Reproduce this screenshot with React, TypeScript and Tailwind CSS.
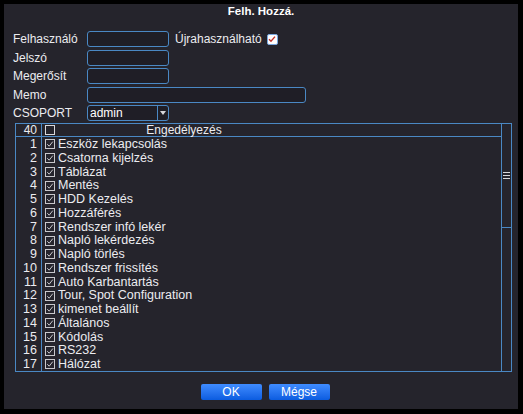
import React from 'react'

const RIGHTS = [
  'Eszköz lekapcsolás',
  'Csatorna kijelzés',
  'Táblázat',
  'Mentés',
  'HDD Kezelés',
  'Hozzáférés',
  'Rendszer infó lekér',
  'Napló lekérdezés',
  'Napló törlés',
  'Rendszer frissítés',
  'Auto Karbantartás',
  'Tour, Spot Configuration',
  'kimenet beállít',
  'Általános',
  'Kódolás',
  'RS232',
  'Hálózat',
]

function Tick() {
  return (
    <svg width="10" height="10" viewBox="0 0 10 10" className="shrink-0">
      <rect x="0.5" y="0.5" width="9" height="9" fill="none" stroke="#c8c8cc" />
      <path d="M2.3 5.2 L4.2 7.2 L7.8 2.6" fill="none" stroke="#c8c8cc" strokeWidth="1" />
    </svg>
  )
}

function Field({ w }: { w: string }) {
  return <div className={`${w} h-[16px] rounded-[3px] border border-[#4a88c4] bg-[#1f1e26]`} />
}

function Row({ label, children }: { label: string; children: React.ReactNode }) {
  return (
    <div className="flex items-center h-[18.5px]">
      <div className="w-[74px] text-[12px] leading-none">{label}</div>
      {children}
    </div>
  )
}

export default function App() {
  return (
    <div
      className="w-[523px] h-[414px] bg-black pt-[4px] pl-[4px] pr-[5px] pb-[5px] text-[#ececf0]"
      style={{ fontFamily: '"Liberation Sans", Arial, sans-serif' }}
    >
      <div className="h-full bg-[#25242c] flex flex-col">
        <div className="h-[14px] pt-[1px] flex items-center justify-center text-[11.5px] font-bold text-white">
          Felh. Hozzá.
        </div>

        <div className="pl-[9px] pt-[12px] flex flex-col">
          <Row label="Felhasználó">
            <Field w="w-[82px]" />
            <span className="ml-[6px] text-[12px] leading-none">Újrahasználható</span>
            <div className="ml-[5px] w-[11px] h-[11px] rounded-[2px] bg-white border border-[#7aa8e0] flex items-center justify-center">
              <svg width="8" height="8" viewBox="0 0 8 8">
                <path d="M1 4.2 L3 6.2 L7 1.6" fill="none" stroke="#c0302a" strokeWidth="1.4" />
              </svg>
            </div>
          </Row>
          <Row label="Jelszó">
            <Field w="w-[82px]" />
          </Row>
          <Row label="Megerősít">
            <Field w="w-[82px]" />
          </Row>
          <Row label="Memo">
            <Field w="w-[219px]" />
          </Row>
          <Row label="CSOPORT">
            <div className="w-[82px] h-[16px] rounded-[3px] border border-[#4a88c4] bg-[#1f1e26] flex">
              <span className="flex-1 pl-[2px] text-[12px] leading-[14px] text-white">admin</span>
              <div className="w-[11px] border-l border-[#4a88c4] flex items-center justify-center">
                <svg width="6" height="4" viewBox="0 0 6 4">
                  <path d="M0 0 H6 L3 4 Z" fill="#d8d8dc" />
                </svg>
              </div>
            </div>
          </Row>
        </div>

        <div className="ml-[11px] mr-[6px] h-[249px] border border-[#4a88c4] flex">
          <div className="flex-1 flex flex-col">
            <div className="h-[14px] border-b border-[#4a88c4] flex items-center text-[12px] leading-none">
              <div className="w-[26px] h-full border-r border-[#4a88c4] flex items-center justify-end pr-[4px]">40</div>
              <div className="ml-[3px] w-[10px] h-[10px] border border-[#d8d8dc]" />
              <div className="flex-1 text-center pr-[188px]">Engedélyezés</div>
            </div>
            <div className="flex-1 flex">
              <div className="w-[26px] border-r border-[#4a88c4] flex flex-col pt-[1px]">
                {RIGHTS.map((_, i) => (
                  <div key={i} className="h-[13.75px] flex items-center justify-end pr-[4px] text-[12.5px] leading-none">
                    {i + 1}
                  </div>
                ))}
              </div>
              <div className="flex-1 flex flex-col pt-[1px] pl-[3px]">
                {RIGHTS.map((r) => (
                  <div key={r} className="h-[13.75px] flex items-center gap-[3px] text-[12.5px] leading-none">
                    <Tick />
                    <span>{r}</span>
                  </div>
                ))}
              </div>
            </div>
          </div>
          <div className="w-[10px] border-l border-[#4a88c4] flex flex-col">
            <div className="h-[104px] border-b border-[#4a88c4] flex flex-col items-center justify-center gap-[2px]">
              <div className="w-[7px] h-[1px] bg-[#d8d8dc]" />
              <div className="w-[7px] h-[1px] bg-[#d8d8dc]" />
              <div className="w-[7px] h-[1px] bg-[#d8d8dc]" />
            </div>
          </div>
        </div>

        <div className="flex justify-center gap-[7px] mt-[12px] pl-[8px]">
          <button className="w-[61px] h-[16px] rounded-[2px] bg-gradient-to-b from-[#3f8cff] to-[#0a5ce0] text-[12px] leading-none text-white">
            OK
          </button>
          <button className="w-[61px] h-[16px] rounded-[2px] bg-gradient-to-b from-[#3f8cff] to-[#0a5ce0] text-[12px] leading-none text-white">
            Mégse
          </button>
        </div>
      </div>
    </div>
  )
}
